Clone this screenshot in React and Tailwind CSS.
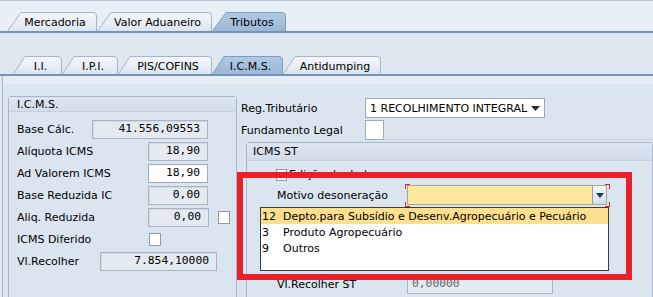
import React from 'react';

const row1 = [
  { label: 'Mercadoria', w: 90, cls: 'w-[90px] h-[19px]' },
  { label: 'Valor Aduaneiro', w: 115, cls: 'w-[115px] h-[19px]' },
  { label: 'Tributos', w: 74, cls: 'w-[74px] h-[19px]', active: true },
];

const row2 = [
  { label: 'I.I.', w: 49, cls: 'w-[49px] h-[18px]' },
  { label: 'I.P.I.', w: 56, cls: 'w-[56px] h-[18px]' },
  { label: 'PIS/COFINS', w: 94, cls: 'w-[94px] h-[18px]' },
  { label: 'I.C.M.S.', w: 71, cls: 'w-[71px] h-[18px]', active: true },
  { label: 'Antidumping', w: 98, cls: 'w-[98px] h-[18px]' },
];

const Tab = ({ label, w, h, slant, cls, active }) => {
  const id = 'g' + label.replace(/[^a-zA-Z]/g, '') + h;
  const outline = `M0.5 ${h} L${slant} 0.5 L${w - 4} 0.5 Q${w - 0.5} 0.5 ${w - 0.5} 4 L${w - 0.5} ${h}`;
  return (
    <div className={`relative shrink-0 flex items-center justify-center pl-[6px] pt-[2px] ${cls}`}>
      <svg className="absolute left-0 top-0" width={w} height={h}>
        <defs>
          <linearGradient id={id} x1="0" y1="0" x2="0" y2="1">
            <stop offset="0" stopColor={active ? '#b1c9e3' : '#f5f8fb'} />
            <stop offset="1" stopColor={active ? '#9cb8d8' : '#dce5ee'} />
          </linearGradient>
        </defs>
        <path d={outline + ' Z'} fill={`url(#${id})`} />
        <path d={outline} fill="none" stroke={active ? '#7f9cbf' : '#a3b6ca'} />
      </svg>
      <span className="relative">{label}</span>
    </div>
  );
};

const ReadBox = ({ cls, value }) => (
  <div className={`h-[19px] bg-[#e3eaf1] border border-[#a9b5c2] shadow-[inset_1px_1px_0_#d0d9e3] flex items-center justify-end pr-[7px] font-['DejaVu_Sans_Mono',monospace] text-[11.3px] ${cls}`}>
    {value}
  </div>
);

const Check = ({ cls = '' }) => (
  <div className={`w-[12px] h-[13px] bg-white border border-[#8d9aa8] ${cls}`} />
);

const IcmsBox = () => (
  <div className="w-[229px] shrink-0 border border-[#a6b7ca] rounded-t-[3px] h-[220px]">
    <div className="h-[15px] flex items-center pl-[8px] bg-gradient-to-b from-[#dde6f0] to-[#d1dde9] border-b border-[#c3d0dd]">
      I.C.M.S.
    </div>
    <div className="pt-[6px] pl-[8px]">
      <div className="flex items-center h-[22px]">
        <span className="w-[75px]">Base Cálc.</span>
        <ReadBox cls="w-[116px]" value="41.556,09553" />
      </div>
      <div className="flex items-center h-[22px]">
        <span className="w-[131px]">Alíquota ICMS</span>
        <ReadBox cls="w-[60px]" value="18,90" />
      </div>
      <div className="flex items-center h-[22px]">
        <span className="w-[131px]">Ad Valorem ICMS</span>
        <div className="w-[60px] h-[19px] bg-white border border-[#9eabb8] flex items-center justify-end pr-[7px] font-['DejaVu_Sans_Mono',monospace] text-[11.3px]">
          18,90
        </div>
      </div>
      <div className="flex items-center h-[22px]">
        <span className="w-[131px]">Base Reduzida IC</span>
        <ReadBox cls="w-[60px]" value="0,00" />
      </div>
      <div className="flex items-center h-[22px]">
        <span className="w-[131px]">Aliq. Reduzida</span>
        <ReadBox cls="w-[61px]" value="0,00" />
        <Check cls="ml-[9px]" />
      </div>
      <div className="flex items-center h-[22px]">
        <span className="w-[132px]">ICMS Diferido</span>
        <Check />
      </div>
      <div className="flex items-center h-[22px]">
        <span className="w-[83px]">Vl.Recolher</span>
        <ReadBox cls="w-[117px]" value="7.854,10000" />
      </div>
    </div>
  </div>
);

const Corner = ({ cls }) => <div className={`absolute w-[5px] h-[5px] border-[#d8252a] ${cls}`} />;

const RightSide = () => (
  <div className="ml-[4px] pt-[2px] flex-1">
    <div className="flex items-center h-[20px]">
      <span className="w-[124px]">Reg.Tributário</span>
      <div className="w-[180px] h-[20px] bg-white border border-[#9eabb8] flex items-center pl-[4px] pr-[4px] justify-between">
        <span>1 RECOLHIMENTO INTEGRAL</span>
        <svg width="9" height="5" viewBox="0 0 9 5"><path d="M0 0h9L4.5 5z" fill="#2c2c2c" /></svg>
      </div>
    </div>
    <div className="flex items-center h-[20px] mt-[2px]">
      <span className="w-[124px]">Fundamento Legal</span>
      <div className="w-[19px] h-[20px] bg-white border border-[#9eabb8]" />
      <div className="flex-1 self-end border-b border-[#c2d0de]" />
    </div>
    <div className="ml-[5px] mt-[2px] border border-[#a6b7ca] rounded-t-[3px] h-[160px]">
      <div className="h-[18px] flex items-center pl-[6px] bg-gradient-to-b from-[#dde6f0] to-[#d1dde9] border-b border-[#c3d0dd]">
        ICMS ST
      </div>
      <div className="pl-[29px] pt-[7px]">
        <div className="flex items-center h-[13px] gap-[2px]">
          <div className="w-[11px] h-[12px] bg-white border border-[#8d9aa8] flex items-center justify-center">
            <svg width="8" height="8" viewBox="0 0 8 8"><path d="M1 4.5l2 2L7 1" stroke="#333" strokeWidth="1.4" fill="none" /></svg>
          </div>
          <span>Edição de dados</span>
        </div>
        <div className="flex items-center h-[20px] mt-[4px]">
          <span className="w-[131px] pl-[1px]">Motivo desoneração</span>
          <div className="relative w-[200px] h-[20px] bg-[#fde99d] border border-[#aaa591] flex justify-end">
            <Corner cls="-left-[3px] -top-[2px] border-l border-t" />
            <Corner cls="-right-[4px] -top-[2px] border-r border-t" />
            <Corner cls="-left-[3px] -bottom-[3px] border-l border-b" />
            <Corner cls="-right-[4px] -bottom-[3px] border-r border-b" />
            <div className="w-[14px] h-full bg-gradient-to-b from-[#f4f7fa] to-[#d3dde8] border-l border-[#8d9db2] flex items-center justify-center">
              <svg width="8" height="5" viewBox="0 0 8 5"><path d="M0 0h8L4 5z" fill="#1f3a63" /></svg>
            </div>
          </div>
        </div>
        <div className="flex items-center h-[20px] mt-[69px]">
          <span className="w-[131px] pl-[1px]">Vl.Recolher ST</span>
          <div className="w-[146px] h-[20px] bg-[#e3eaf1] border border-[#a9b5c2] flex items-center pl-[4px] text-[#666] font-['DejaVu_Sans_Mono',monospace] text-[11.3px]">
            0,00000
          </div>
        </div>
      </div>
    </div>
  </div>
);

const options = [
  ['12', 'Depto.para Subsídio e Desenv.Agropecuário e Pecuário'],
  ['3', 'Produto Agropecuário'],
  ['9', 'Outros'],
];

export default function App() {
  return (
    <div className="relative w-[653px] h-[297px] overflow-hidden bg-[#dfe8f1] text-[11px] leading-none text-black font-['DejaVu_Sans',sans-serif]">
      <div className="bg-[#e9eff6] border-t border-[#b4c4d6]">
        <div className="flex items-end h-[30px] pl-[7px]">
          {row1.map((t) => (
            <Tab key={t.label} {...t} h={19} slant={14} />
          ))}
        </div>
      </div>
      <div className="h-[2px] bg-[#7593b8]" />
      <div className="flex items-end h-[41px] pl-[13px]">
        {row2.map((t) => (
          <Tab key={t.label} {...t} h={18} slant={12} />
        ))}
      </div>
      <div className="h-[2px] bg-[#7593b8]" />
      <div className="ml-[2px] border-l border-[#a7b8cb] h-[230px]">
        <div className="h-[8px] bg-[#e6edf4]" />
        <div className="flex pl-[5px] pt-[12px] bg-[#dbe5f0] h-full">
          <IcmsBox />
          <RightSide />
        </div>
      </div>

      <div className="absolute left-[237px] top-[172px] w-[395px] h-[108px] border-[6px] border-[#e8202a]" />

      <div className="absolute left-[260px] top-[207px] w-[349px] h-[64px] bg-white border border-[#3c3c3c]">
        {options.map(([code, text], i) => (
          <div key={code} className={`flex items-center h-[16px] pl-[1px] ${i === 0 ? 'bg-[#fddf8e]' : ''}`}>
            <span className="w-[21px]">{code}</span>
            <span>{text}</span>
          </div>
        ))}
      </div>
    </div>
  );
}
